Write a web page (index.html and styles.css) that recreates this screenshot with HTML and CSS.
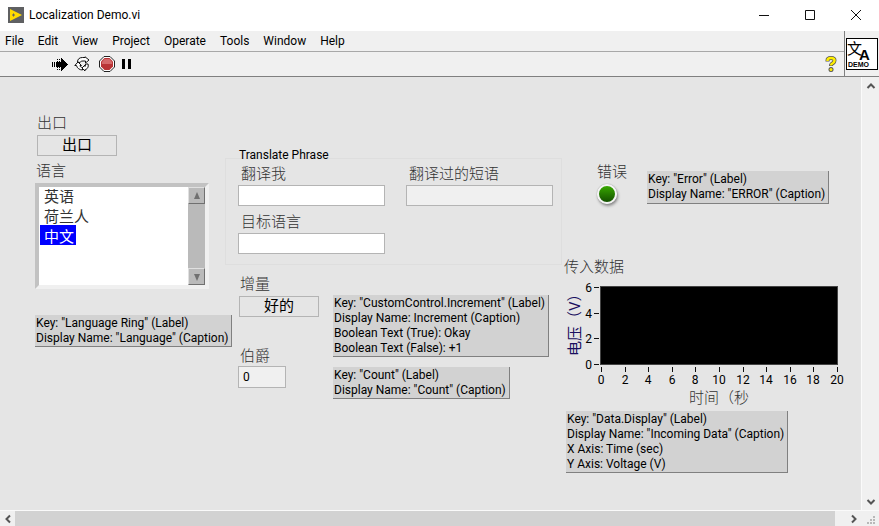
FILE: index.html
```html
<!DOCTYPE html>
<html lang="en">
<head>
<meta charset="utf-8">
<title>Localization Demo.vi</title>
<link rel="stylesheet" href="styles.css">
</head>
<body>
<header class="titlebar">
  <svg class="app-icon" width="16" height="16" viewBox="0 0 16 16" aria-hidden="true">
    <rect width="16" height="16" fill="#5f6062"/>
    <path d="M2 2v12L14 8z" fill="#ffdb00"/>
    <path d="M4 8h3M5.500 6.500v3" stroke="#5f6062"/>
  </svg>
  <h1 class="title">Localization Demo.vi</h1>
  <div class="window-controls">
    <button aria-label="Minimize"><svg width="12" height="12" viewBox="0 0 12 12"><path d="M1 5.500h10" stroke="#111"/></svg></button>
    <button aria-label="Maximize"><svg width="12" height="12" viewBox="0 0 12 12"><path d="M1.500 .5h9v9h-9z" fill="none" stroke="#111"/></svg></button>
    <button aria-label="Close"><svg width="12" height="12" viewBox="0 0 12 12"><path d="M1 0l10 10M11 0L1 10" stroke="#111"/></svg></button>
  </div>
</header>

<div class="bars">
  <div class="bars-main">
    <nav class="menubar">
      <button>File</button><button>Edit</button><button>View</button><button>Project</button><button>Operate</button><button>Tools</button><button>Window</button><button>Help</button>
    </nav>
    <div class="toolbar">
      <button aria-label="Run"><svg width="16" height="16" viewBox="0 0 16 16" shape-rendering="crispEdges">
        <path d="M0 6h1v5H0zM2 6h1v5H2zM4 6h5V2h1v1h1v1h1v1h1v1h1v1h1v1h1v1h-1v1h-1v1h-1v1h-1v1h-1v1h-1v1H9v-4H4z" fill="#000"/>
        <path d="M5 3h1v1H5zM7 3h1v1H7zM5 13h1v1H5zM7 13h1v1H7zM5 5h1v1H5zM7 5h1v1H7zM5 11h1v1H5zM7 11h1v1H7z" fill="#000"/>
      </svg></button>
      <button aria-label="Run continuously"><svg width="16" height="16" viewBox="0 0 16 16">
        <g fill="#fff" stroke="#111" stroke-linejoin="round">
          <path d="M3.500 6c0-3 2-4.500 5-4.500h2.500V.8L15 4l-3.500 3V5H9C7 5 6.500 5.500 6 6.500z"/>
          <path d="M.8 9.500L4 6l3.500 3.500H6c0 1 1 2 2.500 2V14C5.500 14 3 12 2.500 9.500z"/>
          <path d="M11.500 8h2.500c1 3-1 5.500-3 5.500v1.500L8 12l3-3v1.500q.5-1 .5-2.500z"/>
        </g>
      </svg></button>
      <button aria-label="Abort execution" class="abort"><svg width="16" height="16" viewBox="0 0 16 16">
        <path d="M5 .5h6L15.500 5v6L11 15.500H5L.5 11V5z" fill="#fff" stroke="#222"/>
        <path d="M5.500 2h5L14 5.500v5L10.500 14h-5L2 10.500v-5z" fill="#b93436"/>
        <path d="M5.500 3h5L13 6v2H3V6z" fill="#d4696a"/>
      </svg></button>
      <button aria-label="Pause" class="pause"><svg width="11" height="12" viewBox="0 0 11 12"><path d="M1 1h3v10H1zM7 1h3v10H7z" fill="#000"/></svg></button>
      <button aria-label="Context help" class="help"><svg width="12" height="16" viewBox="0 0 12 16">
        <path d="M2.500 5.500V4.500q0-2.500 3.500-2.500t3.500 2.500q0 1.500-1.500 2.500-2 1-2 3" fill="none" stroke="#555" stroke-width="4"/>
        <circle cx="6" cy="13.500" r="2.500" fill="#555"/>
        <path d="M2.500 5V4.500q0-2.500 3.500-2.500t3.500 2.500q0 1.500-1.500 2.500-2 1-2 2.500" fill="none" stroke="#ffee00" stroke-width="2.500"/>
        <circle cx="6" cy="13.500" r="1.500" fill="#ffee00"/>
      </svg></button>
    </div>
  </div>
  <div class="vi-cell">
    <svg width="32" height="32" viewBox="0 0 32 32">
      <rect x=".5" y=".5" width="31" height="31" fill="#fff" stroke="#000"/>
      <text x="1" y="16" class="vi-han">文</text>
      <text x="13" y="22" class="vi-latin">A</text>
      <text x="2" y="29" class="vi-demo">DEMO</text>
    </svg>
  </div>
</div>

<div class="workspace">
  <main class="panel">
    <section class="col col-language">
      <label class="caption" for="exit">出口</label>
      <button id="exit" class="push exit">出口</button>
      <label class="caption caption-language" for="language">语言</label>
      <div class="listbox">
        <select id="language" size="5">
          <option>英语</option>
          <option>荷兰人</option>
          <option selected>中文</option>
        </select>
        <div class="list-scroll">
          <button aria-label="Scroll up"><svg width="8" height="8" viewBox="0 0 8 8"><path d="M4 0l3 7H1z" fill="#707070"/></svg></button>
          <button aria-label="Scroll down"><svg width="8" height="8" viewBox="0 0 8 8"><path d="M1 1h6L4 8z" fill="#707070"/></svg></button>
        </div>
      </div>
      <p class="note note-language">Key: "Language Ring" (Label)<br>Display Name: "Language" (Caption)</p>
    </section>

    <section class="col col-phrase">
      <div class="group" role="group" aria-labelledby="phrase-title">
        <h2 class="group-title" id="phrase-title">Translate Phrase</h2>
        <div class="group-box">
          <div class="field"><label class="caption" for="source">翻译我</label><input id="source" type="text"></div>
          <div class="field"><label class="caption" for="result">翻译过的短语</label><input id="result" type="text" readonly></div>
          <div class="field"><label class="caption" for="target">目标语言</label><input id="target" type="text"></div>
        </div>
      </div>
      <div class="counter">
        <div class="counter-controls">
          <label class="caption" for="increment">增量</label>
          <button id="increment" class="push">好的</button>
          <label class="caption caption-count" for="count">伯爵</label>
          <input id="count" class="count" type="text" value="0" readonly>
        </div>
        <div class="counter-notes">
          <p class="note">Key: "CustomControl.Increment" (Label)<br>Display Name: Increment (Caption)<br>Boolean Text (True): Okay<br>Boolean Text (False): +1</p>
          <p class="note">Key: "Count" (Label)<br>Display Name: "Count" (Caption)</p>
        </div>
      </div>
    </section>

    <section class="col col-data">
      <div class="error">
        <div class="error-status">
          <span class="caption">错误</span>
          <span class="led" role="img" aria-label="Off"></span>
        </div>
        <p class="note">Key: "Error" (Label)<br>Display Name: "ERROR" (Caption)</p>
      </div>
      <h2 class="caption">传入数据</h2>
      <svg class="chart" width="282" height="130" viewBox="0 0 282 130">
        <rect x="36" y="9" width="238" height="79" fill="#444"/>
        <rect x="37" y="10" width="236" height="77" fill="#000"/>
        <path d="M30 10.500h5M30 36.500h5M30 61.500h5M30 87.500h5M37.500 90v5M61.500 90v5M84.500 90v5M108.500 90v5M131.500 90v5M155.500 90v5M179.500 90v5M202.500 90v5M226.500 90v5M249.500 90v5M273.500 90v5" stroke="#111"/>
        <g class="tick tick-y">
          <text x="28" y="15">6</text><text x="28" y="41">4</text><text x="28" y="66">2</text><text x="28" y="92">0</text>
        </g>
        <g class="tick tick-x">
          <text x="37" y="107">0</text><text x="61" y="107">2</text><text x="84" y="107">4</text><text x="108" y="107">6</text><text x="131" y="107">8</text><text x="155" y="107">10</text><text x="179" y="107">12</text><text x="202" y="107">14</text><text x="226" y="107">16</text><text x="249" y="107">18</text><text x="273" y="107">20</text>
        </g>
        <text class="axis-y" transform="rotate(-90)" x="-79" y="16">电压（V）</text>
        <text class="axis-x" x="125" y="126">时间（秒</text>
      </svg>
      <p class="note note-data">Key: "Data.Display" (Label)<br>Display Name: "Incoming Data" (Caption)<br>X Axis: Time (sec)<br>Y Axis: Voltage (V)</p>
    </section>
  </main>
  <div class="vscroll">
    <button aria-label="Scroll panel up"><svg width="10" height="8" viewBox="0 0 10 8"><path d="M1.500 6L5 2.500 8.500 6" /></svg></button>
    <button aria-label="Scroll panel down"><svg width="10" height="8" viewBox="0 0 10 8"><path d="M1.500 2L5 5.500 8.500 2" /></svg></button>
  </div>
</div>

<footer class="hscroll">
  <button aria-label="Scroll panel left"><svg width="8" height="10" viewBox="0 0 8 10"><path d="M6 1.500L2.500 5 6 8.500" /></svg></button>
  <div class="thumb"></div>
  <button aria-label="Scroll panel right"><svg width="8" height="10" viewBox="0 0 8 10"><path d="M2 1.500L5.500 5 2 8.500" /></svg></button>
  <svg class="grip" width="9" height="9" viewBox="0 0 9 9" shape-rendering="crispEdges"><path d="M6 0h2v2H6zM3 3h2v2H3zM6 3h2v2H6zM0 6h2v2H0zM3 6h2v2H3zM6 6h2v2H6z" fill="#b8b8b8"/></svg>
</footer>
</body>
</html>
```
FILE: styles.css
```css
* { box-sizing: border-box; }

body {
  margin: 0;
  min-height: 100vh;
  display: flex;
  flex-direction: column;
  background: #f0f0f0;
  color: #000;
  font: 12px/15px Roboto, "Noto Sans CJK SC", sans-serif;
}

button, input, select { font: inherit; color: inherit; border-radius: 0; }
button { margin: 0; padding: 0; border: 0; background: none; }
h1, h2, p { margin: 0; font-size: inherit; font-weight: normal; }
svg { display: block; }

/* Window frame */
.titlebar { display: flex; align-items: center; height: 31px; padding-left: 8px; background: #fff; }
.app-icon { margin-bottom: 2px; }
.title { margin-left: 5px; }
.window-controls { display: flex; margin-left: auto; }
.window-controls button { width: 46px; height: 30px; display: grid; place-items: center; }

.bars { display: flex; border-bottom: 1px solid #808080; }
.bars-main { flex: 1; }
.menubar { display: flex; gap: 14px; height: 21px; padding-left: 5px; border-bottom: 1px solid #a8a8a8; }
.toolbar { display: flex; align-items: center; height: 24px; padding: 0 7px 0 52px; }
.toolbar button { margin-right: 6px; }
.toolbar .abort { margin-left: 3px; }
.toolbar .help { margin: 0 0 0 auto; }
.vi-cell { display: grid; place-items: center start; width: 35px; padding-left: 1px; border-left: 1px solid #808080; }
.vi-han { font: 15px "Noto Sans CJK SC", sans-serif; }
.vi-latin { font: bold 15px "Liberation Sans", sans-serif; }
.vi-demo { font: bold 7px "Liberation Sans", sans-serif; }

/* Front panel */
.workspace { flex: 1; display: flex; }
.panel {
  flex: 1;
  display: grid;
  grid-template-columns: 190px 339px 1fr;
  align-items: start;
  padding: 36px 0 0 35px;
  background: #e5e5e5;
}
.col { display: flex; flex-direction: column; align-items: flex-start; }
.caption { font-size: 15px; line-height: 20px; font-weight: 300; color: #333; white-space: nowrap; }
.note {
  width: max-content;
  padding: 1px 3px 0 1px;
  border-right: 1px solid #808080;
  border-bottom: 1px solid #808080;
  background: #d2d2d2;
  white-space: nowrap;
}
.push {
  width: 80px;
  height: 21px;
  margin-top: 2px;
  border: 1px solid #b4b4b4;
  font-size: 15px;
  line-height: 19px;
}
.panel input { display: block; width: 147px; height: 21px; padding: 0 4px; border: 1px solid #b4b4b4; background: #fff; }
.panel input:read-only { background: #f0f0f0; }

.col-language .caption, .exit { margin-left: 2px; }
.col-language .caption-language { margin: 5px 0 2px 1px; }
.listbox {
  display: flex;
  width: 174px;
  height: 106px;
  border: 4px solid;
  border-color: #c2c2c2 #f0f0f0 #f0f0f0 #c2c2c2;
  background: #fff;
}
.listbox select {
  flex: 1;
  min-width: 0;
  margin-top: -2px;
  padding: 0;
  border: 0;
  background: transparent;
  outline: 0;
  overflow: hidden;
  font-size: 15px;
  font-weight: 300;
  color: #333;
}
.listbox option { width: fit-content; height: 20px; min-height: 20px; margin-left: 1px; padding: 0 2px 0 4px; line-height: 16px; }
.listbox option:checked { background: #00f linear-gradient(#00f, #00f); color: #fff; }
.list-scroll { display: flex; flex-direction: column; justify-content: space-between; width: 17px; background: #bababa; }
.list-scroll button {
  height: 17px;
  display: grid;
  place-items: center;
  border: 1px solid;
  border-color: #e0e0e0 #707070 #707070 #e0e0e0;
}
.note-language { margin-top: 26px; }

.col-phrase { margin-top: 34px; }
.group { width: 337px; }
.group-title { padding-left: 14px; line-height: 16px; }
.group-box {
  display: grid;
  grid-template-columns: 147px 147px;
  gap: 6px 21px;
  margin-top: -5px;
  padding: 5px 7px 10px 12px;
  border: 1px solid #dedede;
}
.field .caption { display: block; margin: 0 0 1px 3px; }
.counter { display: flex; gap: 13px; margin: 9px 0 0 13px; }
.counter-controls { display: flex; flex-direction: column; align-items: flex-start; width: 82px; }
.counter-controls .caption { margin-left: 2px; }
.counter-controls .push { margin-left: 1px; }
.counter-controls .caption-count { margin-top: 29px; }
.panel .count { width: 48px; height: 22px; }
.counter-notes { display: flex; flex-direction: column; gap: 10px; padding-top: 21px; }

.col-data { margin-top: 49px; }
.error { display: flex; gap: 20px; margin: 0 0 53px 33px; }
.error-status { display: flex; flex-direction: column; align-items: flex-start; }
.error .note { margin-top: 9px; }
.led {
  width: 20px;
  height: 20px;
  margin-top: 2px;
  border: 2px solid #f4f4f4;
  border-radius: 50%;
  background: linear-gradient(#38a800, #145000);
  box-shadow: 0 0 1px #777, 1px 2px 3px #888;
}
.tick { font-size: 12px; }
.tick-y { text-anchor: end; }
.tick-x { text-anchor: middle; }
.axis-y { font-size: 15px; fill: #1a1060; }
.axis-x { font-size: 15px; font-weight: 300; fill: #333; }
.note-data { margin: 4px 0 0 2px; }

/* Panel scroll bars */
.vscroll { display: flex; flex-direction: column; justify-content: space-between; width: 18px; padding: 5px 4px 4px; border-left: 1px solid #fafafa; }
.hscroll { display: flex; align-items: center; height: 16px; border-top: 1px solid #fafafa; }
.hscroll button { display: grid; place-items: center; width: 15px; height: 15px; }
.hscroll .thumb { flex: 1; height: 15px; margin-right: 11px; background: #d2d2d2; }
.vscroll path, .hscroll button path { fill: none; stroke: #555; stroke-width: 2; }
.grip { margin: 4px 3px 0 6px; }
```
